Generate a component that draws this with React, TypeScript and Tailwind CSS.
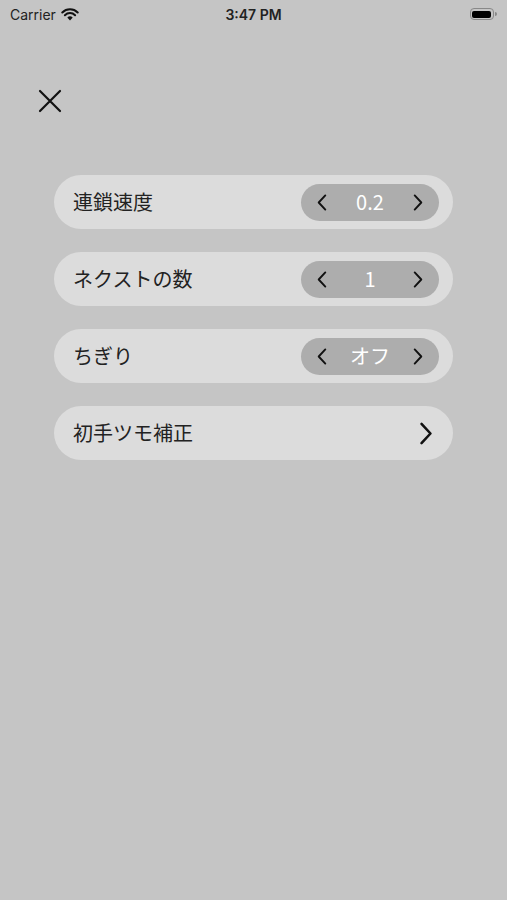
import React, { useState } from 'react';

const jp = "font-['Noto_Sans_CJK_JP','Noto_Sans',sans-serif]";

const Chevron: React.FC<{ dir: 'left' | 'right'; className?: string }> = ({ dir, className }) => (
  <svg viewBox="0 0 10 18" className={className} fill="none" stroke="#111" strokeWidth={2} strokeLinecap="round" strokeLinejoin="round">
    {dir === 'left' ? <path d="M8.5 1.5 L1.5 9 L8.5 16.5" /> : <path d="M1.5 1.5 L8.5 9 L1.5 16.5" />}
  </svg>
);

const StatusBar = () => (
  <div className="h-[28px] flex items-center justify-between px-[10px] font-['Inter',sans-serif] text-[14px] text-[#222]">
    <div className="flex items-center gap-[5px] w-[120px]">
      <span>Carrier</span>
      <svg width="18" height="13" viewBox="0 0 18 13">
        <path d="M9 12.5 L6.3 9.6 A3.8 3.8 0 0 1 11.7 9.6 Z" fill="#111" />
        <path d="M3.9 7.2 A7.3 7.3 0 0 1 14.1 7.2" stroke="#111" strokeWidth="2" fill="none" strokeLinecap="round" />
        <path d="M1.3 4.5 A11 11 0 0 1 16.7 4.5" stroke="#111" strokeWidth="2" fill="none" strokeLinecap="round" />
      </svg>
    </div>
    <span className="font-semibold">3:47 PM</span>
    <div className="w-[120px] flex justify-end items-center">
      <div className="w-[24px] h-[12px] rounded-[4px] border border-[#888] p-[1.5px]">
        <div className="w-full h-full rounded-[2px] bg-black" />
      </div>
      <div className="w-[2px] h-[4px] bg-[#888] rounded-r-sm ml-[1px]" />
    </div>
  </div>
);

const StepperRow: React.FC<{ label: string; values: string[] }> = ({ label, values }) => {
  const [i, setI] = useState(0);
  return (
    <div className="h-[54px] rounded-full bg-[#dcdcdc] flex items-center justify-between pl-[19px] pr-[14px]">
      <span className={`${jp} text-[20px] text-[#222]`}>{label}</span>
      <div className="w-[138px] h-[37px] rounded-full bg-[#adadad] flex items-center justify-between px-[16px]">
        <button onClick={() => setI((i - 1 + values.length) % values.length)}>
          <Chevron dir="left" className="w-[10px] h-[17px]" />
        </button>
        <span className={`${jp} text-[20px] text-white`}>{values[i]}</span>
        <button onClick={() => setI((i + 1) % values.length)}>
          <Chevron dir="right" className="w-[10px] h-[17px]" />
        </button>
      </div>
    </div>
  );
};

export default function App() {
  return (
    <div className="w-[507px] h-[900px] bg-[#c5c5c5] overflow-hidden">
      <StatusBar />
      <div className="pl-[38px] pt-[61px]">
        <button className="w-[24px] h-[24px] block">
          <svg viewBox="0 0 24 24" className="w-[24px] h-[24px]" stroke="#111" strokeWidth={2.2} strokeLinecap="round">
            <path d="M2 2 L22 22 M22 2 L2 22" />
          </svg>
        </button>
      </div>
      <div className="ml-[54px] w-[399px] mt-[62px] flex flex-col gap-[23px]">
        <StepperRow label="連鎖速度" values={['0.2', '0.3', '0.4', '0.5']} />
        <StepperRow label="ネクストの数" values={['1', '2']} />
        <StepperRow label="ちぎり" values={['オフ', 'オン']} />
        <button className="h-[54px] rounded-full bg-[#dcdcdc] flex items-center justify-between pl-[19px] pr-[20px]">
          <span className={`${jp} text-[20px] text-[#222]`}>初手ツモ補正</span>
          <Chevron dir="right" className="w-[14px] h-[23px]" />
        </button>
      </div>
    </div>
  );
}
